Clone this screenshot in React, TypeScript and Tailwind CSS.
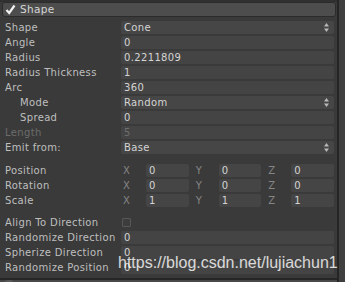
import React from 'react';

/**
 * Unity particle system "Shape" module inspector
 */

type Row =
  | { kind: 'field'; label: string; value: string; indent?: boolean; dim?: boolean }
  | { kind: 'dropdown'; label: string; value: string; indent?: boolean }
  | { kind: 'vector'; label: string; x: string; y: string; z: string }
  | { kind: 'check'; label: string }
  | { kind: 'gap'; h: string };

const rows: Row[] = [
  { kind: 'dropdown', label: 'Shape', value: 'Cone' },
  { kind: 'field', label: 'Angle', value: '0' },
  { kind: 'field', label: 'Radius', value: '0.2211809' },
  { kind: 'field', label: 'Radius Thickness', value: '1' },
  { kind: 'field', label: 'Arc', value: '360' },
  { kind: 'dropdown', label: 'Mode', value: 'Random', indent: true },
  { kind: 'field', label: 'Spread', value: '0', indent: true },
  { kind: 'field', label: 'Length', value: '5', dim: true },
  { kind: 'dropdown', label: 'Emit from:', value: 'Base' },
  { kind: 'gap', h: 'h-[8px]' },
  { kind: 'vector', label: 'Position', x: '0', y: '0', z: '0' },
  { kind: 'vector', label: 'Rotation', x: '0', y: '0', z: '0' },
  { kind: 'vector', label: 'Scale', x: '1', y: '1', z: '1' },
  { kind: 'gap', h: 'h-[7px]' },
  { kind: 'check', label: 'Align To Direction' },
  { kind: 'field', label: 'Randomize Direction', value: '0' },
  { kind: 'field', label: 'Spherize Direction', value: '0' },
  { kind: 'field', label: 'Randomize Position', value: '0' },
];

function Arrows() {
  return (
    <svg width="5" height="9" viewBox="0 0 5 9" className="shrink-0">
      <path d="M2.5 0 L5 3.5 L0 3.5 Z" fill="#b8b8b8" />
      <path d="M0 5.5 L5 5.5 L2.5 9 Z" fill="#b8b8b8" />
    </svg>
  );
}

function Label({ text, indent, dim }: { text: string; indent?: boolean; dim?: boolean }) {
  return (
    <div
      className={`w-[121px] shrink-0 whitespace-nowrap ${indent ? 'pl-[20px]' : 'pl-[5px]'} ${
        dim ? 'text-[#6c6c6c]' : 'text-[#bfbfbf]'
      }`}
    >
      {text}
    </div>
  );
}

function VectorPart({ axis, value }: { axis: string; value: string }) {
  return (
    <div className="flex-1 flex items-center">
      <div className="w-[25px] shrink-0 pl-[2px] text-[#858585]">{axis}</div>
      <div className="flex-1 h-[13px] bg-[#454545] rounded-[2px] pl-[3px] flex items-center text-[#d4d4d4]">
        {value}
      </div>
    </div>
  );
}

function InspectorRow({ row }: { row: Row }) {
  if (row.kind === 'gap') return <div className={row.h} />;

  return (
    <div className="h-[15px] flex items-center pr-[3px]">
      <Label
        text={row.label}
        indent={'indent' in row ? row.indent : false}
        dim={row.kind === 'field' ? row.dim : false}
      />
      {row.kind === 'field' && (
        <div
          className={`flex-1 h-[13px] bg-[#444444] rounded-[2px] pl-[3px] flex items-center ${
            row.dim ? 'text-[#6e6e6e]' : 'text-[#d4d4d4]'
          }`}
        >
          {row.value}
        </div>
      )}
      {row.kind === 'dropdown' && (
        <div className="flex-1 h-[13px] bg-[#464646] rounded-[2px] pl-[3px] pr-[5px] flex items-center justify-between text-[#d4d4d4]">
          <span>{row.value}</span>
          <Arrows />
        </div>
      )}
      {row.kind === 'vector' && (
        <div className="flex-1 flex gap-[5px]">
          <VectorPart axis="X" value={row.x} />
          <VectorPart axis="Y" value={row.y} />
          <VectorPart axis="Z" value={row.z} />
        </div>
      )}
      {row.kind === 'check' && (
        <div className="flex-1 flex items-center pl-[1px]">
          <div className="w-[9px] h-[9px] border border-[#575757] bg-[#3d3d3d] rounded-[1px]" />
        </div>
      )}
    </div>
  );
}

export default function App() {
  return (
    <div className="w-[345px] h-[282px] bg-[#3a3a3a] flex overflow-hidden relative font-['DejaVu_Sans',sans-serif] text-[10px] leading-none tracking-[0.35px]">
      <div className="w-[337px] flex flex-col">
        <div className="h-[2px] bg-[#303030]" />
        {/* Module header */}
        <div className="h-[15px] ml-[2px] mr-[1px] bg-[#4d4d4d] border border-[#2c2c2c] rounded-[3px] flex items-center pl-[2px] gap-[4px]">
          <svg width="11" height="11" viewBox="0 0 11 11">
            <path d="M1.5 6 L4.2 9 L9.5 1.5" stroke="#f2f2f2" strokeWidth="2.2" fill="none" />
          </svg>
          <span className="text-[#d6d6d6] text-[10.5px]">Shape</span>
        </div>
        <div className="h-[3px]" />

        {rows.map((row, i) => (
          <InspectorRow key={i} row={row} />
        ))}

        <div className="flex-1" />
        <div className="h-[2px] bg-[#262626]" />
        <div className="h-[2px] bg-[#484848] relative">
          <div className="absolute left-[4px] top-0 w-[10px] h-[4px] rounded-t-full bg-[#5a5a5a]" />
        </div>
      </div>
      {/* Scrollbar */}
      <div className="w-[2px] bg-[#252525]" />
      <div className="flex-1 bg-[#3f3f3f]" />

      {/* Watermark */}
      <div className="absolute left-[118px] top-[255px] font-['Liberation_Sans',Arial,sans-serif] text-[16px] leading-none tracking-normal text-white/80">
        https://blog.csdn.net/lujiachun1
      </div>
    </div>
  );
}
